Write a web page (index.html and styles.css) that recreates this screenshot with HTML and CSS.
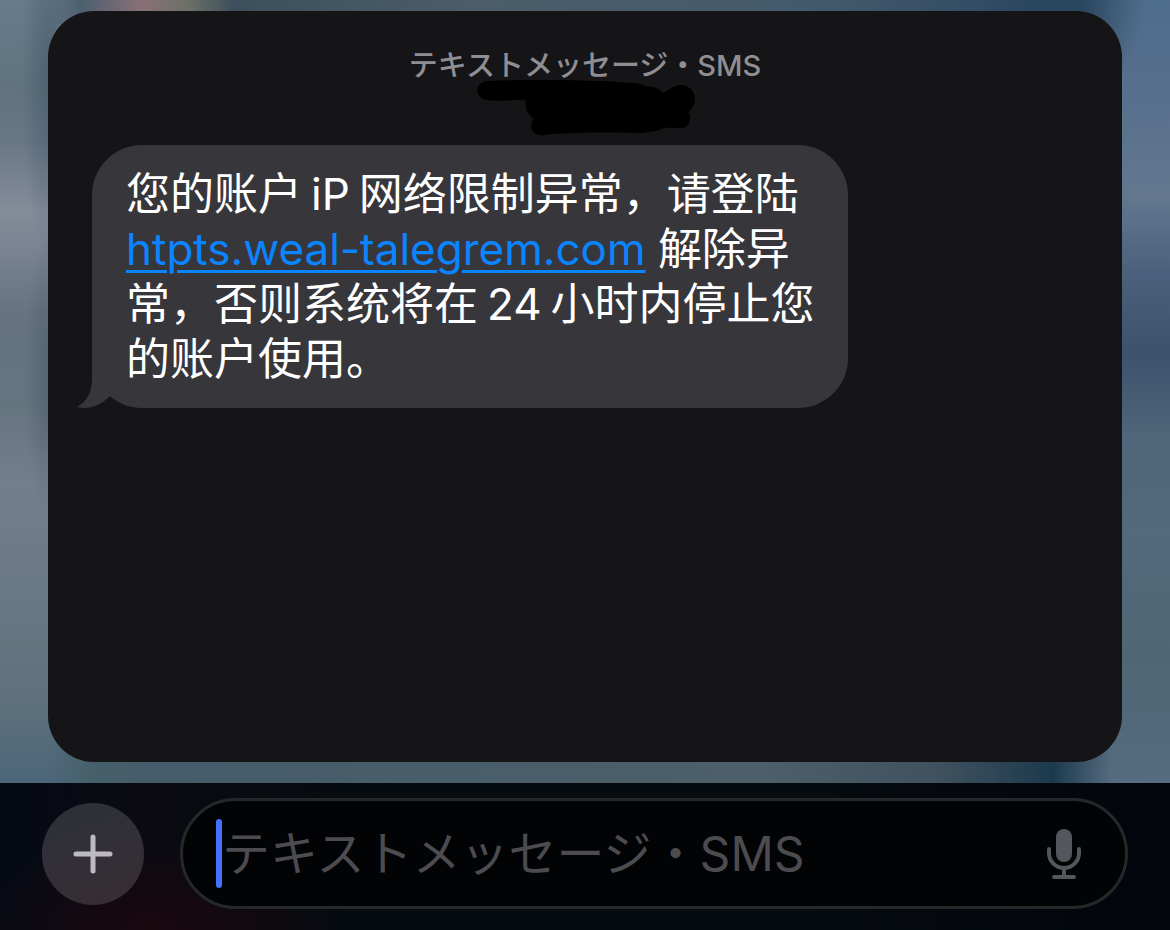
FILE: index.html
```
<!DOCTYPE html>
<html lang="ja">
<head>
    <meta charset="UTF-8">
    <meta name="viewport" content="width=device-width, initial-scale=1.0">
    <title>SMS</title>
    <link rel="stylesheet" href="styles.css">
</head>
<body>
    <main class="backdrop">
        <section class="card">
            <!-- Thread header with the sender hidden -->
            <header class="thread-header">
                <h1 class="thread-type">テキストメッセージ・SMS</h1>
                <svg class="redaction" viewBox="-2 0 220 56" aria-hidden="true">
                    <path d="M10 1 C50 -1 120 0 155 3 C163 3 166 5 169 6 C178 7 183 9 186 13 C193 9 198 5 204 5 C213 5 218 12 218 20 C217 26 214 30 211 32 C215 37 213 46 206 48 C200 49 195 47 188 48 C180 51 170 53 158 53 C125 52 95 53 75 54 C68 55 66 56 62 55 C52 53 53 42 57 39 C50 34 48 28 49 20 C38 19 26 22 10 20 C-3 17 -3 3 10 1 Z"/>
                </svg>
            </header>
            <div class="bubble">
                <p class="message" lang="zh-CN">您的账户<span class="latin">iP</span>网络限制异常，请登陆 <a class="link" href="#">htpts.weal-talegrem.com</a> 解除异常，否则系统将在<span class="latin">24</span>小时内停止您的账户使用。</p>
                <svg class="tail" viewBox="0 0 40 60" aria-hidden="true">
                    <path d="M16 0 V30 C16 43 12 53 1 59 C12 62 24 58 33 49 L40 44 V0 Z"/>
                </svg>
            </div>
        </section>
    </main>
    <form class="composer">
        <button class="add" type="button" aria-label="追加">
            <svg viewBox="0 0 40 40" aria-hidden="true">
                <path d="M20 3 V37 M3 20 H37"/>
            </svg>
        </button>
        <div class="field">
            <span class="caret"></span>
            <input class="field-input" type="text" aria-label="メッセージ" placeholder="テキストメッセージ・SMS">
            <button class="mic" type="button" aria-label="音声入力">
                <svg viewBox="0 0 36 52" aria-hidden="true">
                    <rect x="10" y="1" width="16" height="33" rx="8"/>
                    <path d="M3 21 V25 A15 15 0 0 0 33 25 V21 M18 41 V49 M8 49 H28"/>
                </svg>
            </button>
        </div>
    </form>
</body>
</html>
```
FILE: styles.css
```
* {
    box-sizing: border-box;
}

body {
    margin: 0;
    min-height: 100vh;
    display: flex;
    flex-direction: column;
    background: #000;
    font-family: Inter, "Noto Sans CJK JP", sans-serif;
}

/* Blurred wallpaper */
.backdrop {
    flex: 1;
    display: flex;
    padding: 11px 48px 21px;
    background:
        radial-gradient(ellipse 80px 100px at 91% 0, #2b465f 20%, transparent 100%),
        linear-gradient(90deg, transparent 4%, #4c5f6e 7%, #8a7078 12%, #6d7068 16%, #3c4f5c 20%, #4b5d6a 40%, #435a6c 70%, #2d4862 88%, transparent 95%) top / 100% 24px no-repeat,
        linear-gradient(90deg, transparent 4%, #45606a 8%, #455c6a 14%, #4c5f6a 65%, #40525f 80%, #1c3a4e 90%, transparent 95%) bottom / 100% 40px no-repeat,
        radial-gradient(ellipse 26px 180px at 48px 10%, rgba(60, 80, 98, 0.5), transparent),
        radial-gradient(ellipse 24px 140px at 48px 48%, rgba(60, 75, 88, 0.4), transparent),
        linear-gradient(180deg, #677b8c 0%, #60737f 11%, #687786 18%, #858c9a 27%, #657382 40%, #657580 52%, #737e8d 62%, #6b7a86 72%, #60727d 88%, #4c667a 100%) left / 50% 100% no-repeat,
        linear-gradient(180deg, #4f6d8c 0%, #566f8c 12%, #63788f 25%, #4a607c 35%, #3d526c 45%, #50667a 56%, #526a7c 68%, #4f6674 84%, #556b80 100%);
}

.card {
    flex: 1;
    padding: 41px 44px;
    border-radius: 46px;
    background: #151517;
}

.thread-header {
    display: flex;
    flex-direction: column;
    align-items: center;
    height: 93px;
}

.thread-type {
    margin: 0;
    font-size: 29px;
    font-weight: 500;
    line-height: 28px;
    color: #8e8e93;
}

.redaction {
    width: 220px;
    height: 56px;
    fill: #000;
}

.bubble {
    position: relative;
    width: fit-content;
    max-width: 756px;
    padding: 22px 33px 21px 34px;
    border-radius: 50px;
    background: #37363b;
}

.message {
    margin: 0;
    font-family: Inter, "Noto Sans CJK SC", sans-serif;
    font-size: 44px;
    line-height: 55px;
    color: #fff;
}

.latin {
    margin: 0 9px;
}

.link {
    color: #0a84ff;
    text-decoration-thickness: 3px;
    text-underline-offset: 5px;
}

/* Sits over the bottom left corner of the bubble */
.tail {
    position: absolute;
    left: -16px;
    bottom: 0;
    width: 40px;
    height: 60px;
    fill: #37363b;
}

.composer {
    display: flex;
    align-items: center;
    gap: 36px;
    padding: 15px 42px 21px;
    background:
        radial-gradient(ellipse 180px 90px at 13% 100%, #1a080f 0%, transparent 100%),
        linear-gradient(90deg, #050a14 0%, #0b0a12 12%, #060b0f 30%, #060b10 70%, #02060c 100%);
}

.add {
    width: 102px;
    height: 102px;
    padding: 31px;
    border: none;
    border-radius: 50%;
    background: linear-gradient(160deg, #2b3138 0%, #322f37 45%, #372d33 100%);
}

.add svg {
    display: block;
    width: 40px;
    height: 40px;
    fill: none;
    stroke: #bcb9c2;
    stroke-width: 5;
    stroke-linecap: round;
}

.field {
    flex: 1;
    display: flex;
    align-items: center;
    height: 111px;
    padding: 0 43px 0 33px;
    border: 3px solid #25282b;
    border-radius: 56px;
    background: #020304;
}

.caret {
    width: 6px;
    height: 69px;
    border-radius: 3px;
    background: #4470ff;
}

.field-input {
    flex: 1;
    min-width: 0;
    padding: 0;
    border: none;
    outline: none;
    background: none;
    font-family: inherit;
    font-size: 48px;
    line-height: 69px;
    color: #fff;
}

.field-input::placeholder {
    color: #4b4b50;
    opacity: 1;
}

.mic {
    padding: 0;
    border: none;
    background: none;
}

.mic svg {
    display: block;
    width: 36px;
    height: 52px;
    fill: #55565d;
    stroke: #55565d;
    stroke-linecap: round;
}

.mic rect {
    stroke: none;
}

.mic path {
    fill: none;
    stroke-width: 4;
}
```
